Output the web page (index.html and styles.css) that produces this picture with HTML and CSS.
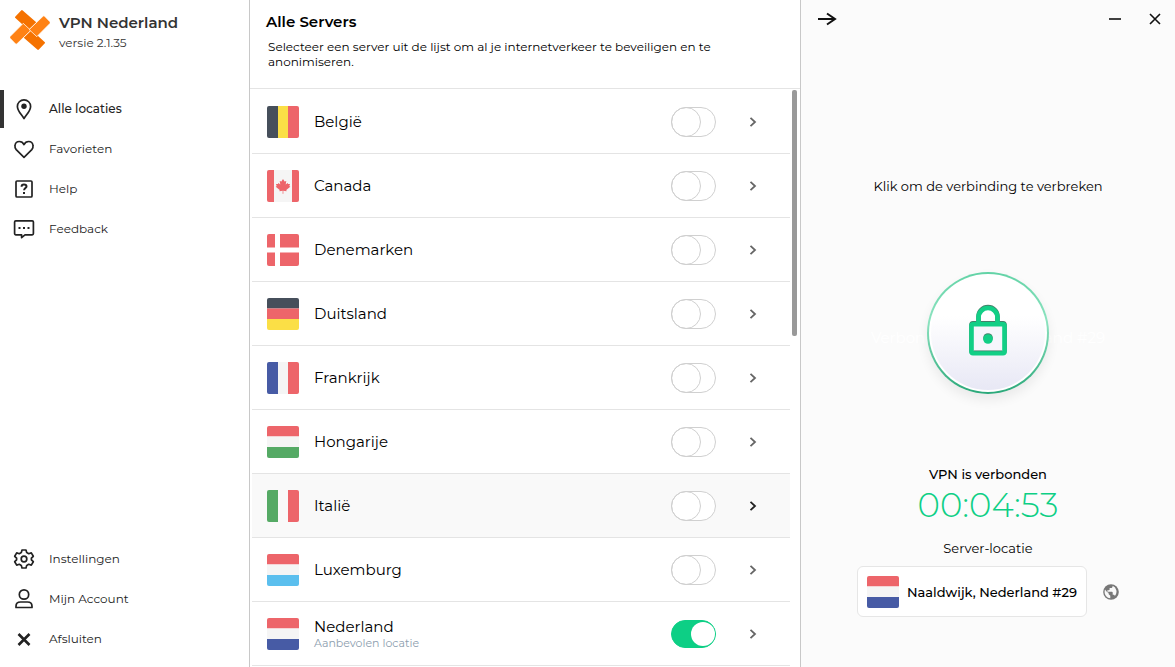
FILE: index.html
```html
<!DOCTYPE html>
<html lang="nl">
<head>
<meta charset="utf-8">
<meta name="viewport" content="width=device-width, initial-scale=1">
<title>VPN Nederland</title>
<link rel="stylesheet" href="styles.css">
</head>
<body>
<div class="app">
  <aside class="sidebar">
    <header class="brand">
      <svg class="brand-logo" viewBox="0.8 0.8 38.4 38.4" aria-hidden="true">
        <path d="M13 1.200 L26 12.500 L18.500 20 L6 8.500 Q5.200 7.800 6 7 L11.500 1.300 Q12.200 .5 13 1.200Z" fill="#f57200"/>
        <path d="M27 38.800 L14 27.500 L21.500 20 L34 31.500 Q34.800 32.200 34 33 L28.500 38.700 Q27.800 39.500 27 38.800Z" fill="#f57200"/>
        <path d="M.9 26.200 L13.500 13.600 L20.800 20.400 L7.500 33.200 Q6.700 34 6 33.300 L.9 28 Q.2 27 .9 26.200Z" fill="#ff8214" stroke="#fff" stroke-width=".7"/>
        <path d="M39.100 13.800 L26.500 26.400 L19.200 19.600 L32.500 6.800 Q33.300 6 34 6.700 L39.100 12 Q39.800 13 39.100 13.800Z" fill="#ff8214" stroke="#fff" stroke-width=".7"/>
      </svg>
      <div>
        <h1 class="brand-name">VPN Nederland</h1>
        <p class="brand-version">versie 2.1.35</p>
      </div>
    </header>

    <nav class="menu">
      <a class="menu-item is-active" href="#locaties">
        <svg class="icon" viewBox="0 0 24 24"><path d="M12 21.500C9.500 17.300 5.400 14 5.400 9.400a6.600 6.600 0 0 1 13.200 0C18.600 14 14.500 17.300 12 21.500Z"/><circle cx="12" cy="9.300" r="2.700" fill="currentColor" stroke="none"/></svg>
        Alle locaties</a>
      <a class="menu-item" href="#favorieten">
        <svg class="icon" viewBox="0 0 24 24"><path d="M12 20.300 4.200 12.600A5 5 0 0 1 3 8.500C3.300 6 5.100 4.500 7.300 4.500c2 0 3.800 1.200 4.700 3 .9-1.800 2.700-3 4.700-3 2.200 0 4 1.500 4.300 4a5 5 0 0 1-1.200 4.100Z"/></svg>
        Favorieten</a>
      <a class="menu-item" href="#help">
        <svg class="icon" viewBox="0 0 24 24"><rect x="4" y="4" width="16" height="16" rx="1"/><path d="M9.600 9.800V9.400c0-1.300 1-2 2.400-2s2.500.8 2.500 2c0 1.600-2.400 1.800-2.400 3.800" stroke-width="2"/><path d="M11 15h2v2h-2z" fill="currentColor" stroke="none"/></svg>
        Help</a>
      <a class="menu-item" href="#feedback">
        <svg class="icon" viewBox="0 0 24 24"><path d="M3.800 3.800h16.400a1.200 1.200 0 0 1 1.200 1.200v11.600a1.200 1.200 0 0 1-1.200 1.200H13l-3.400 2.800v-2.800H3.800a1.200 1.200 0 0 1-1.200-1.200V5a1.200 1.200 0 0 1 1.200-1.200Z"/><path d="M6.500 10h2v2h-2zM11 10h2v2h-2zM15.500 10h2v2h-2z" fill="currentColor" stroke="none"/></svg>
        Feedback</a>
    </nav>

    <nav class="menu menu-bottom">
      <a class="menu-item" href="#instellingen">
        <svg class="icon" viewBox="0 0 24 24"><circle cx="12" cy="12" r="2.800"/><path d="M10 3h4l.7 2.600 2 1.100 2.600-.8 2 3.400-1.900 1.900v1.600l1.900 1.900-2 3.400-2.600-.8-2 1.100L14 21h-4l-.7-2.600-2-1.100-2.600.8-2-3.400 1.900-1.900v-1.600L2.700 9.300l2-3.400 2.600.8 2-1.100Z"/></svg>
        Instellingen</a>
      <a class="menu-item" href="#account">
        <svg class="icon" viewBox="0 0 24 24"><circle cx="12" cy="7.500" r="4.700"/><path d="M4 20.500v-1.300c0-2.600 2-4.200 4.500-4.200h7c2.500 0 4.500 1.600 4.500 4.200v1.300Z"/></svg>
        Mijn Account</a>
      <a class="menu-item" href="#afsluiten">
        <svg class="icon" viewBox="0 0 24 24"><path d="m6.500 7 11 11M17.500 7l-11 11" stroke-width="2.600"/></svg>
        Afsluiten</a>
    </nav>
  </aside>

  <main class="servers">
    <header class="servers-head">
      <h2 class="servers-title">Alle Servers</h2>
      <p class="servers-text">Selecteer een server uit de lijst om al je internetverkeer te beveiligen en te anonimiseren.</p>
    </header>
    <div class="servers-body">
      <ul class="server-list">
        <li class="server">
          <svg class="flag" viewBox="0 0 32 32"><path fill="#464f5b" d="M0 0h11v32H0z"/><path fill="#fbdf46" d="M11 0h10v32H11z"/><path fill="#ed656a" d="M21 0h11v32H21z"/></svg>
          <label class="server-label" for="s1">België</label>
          <input class="toggle" type="checkbox" id="s1">
          <button class="more" aria-label="Meer over België"><svg viewBox="0 0 8 12"><path d="m1.500 1.800 4.500 4.200-4.500 4.200"/></svg></button>
        </li>
        <li class="server">
          <svg class="flag" viewBox="0 0 32 32"><path fill="#f5f5f5" d="M0 0h32v32H0z"/><path fill="#ed656a" d="M0 0h7v32H0zM25 0h7v32h-7zM16 9l1.600 2.600 1.700-.7-.6 3.600 1.900-1.400.5 1 2-.2-.8 2 1 .8-4 3.200.3 1.300-3.300-.4.100 3h-.8l.100-3-3.300.4.3-1.300-4-3.200 1-.8-.8-2 2 .2.5-1 1.900 1.400-.6-3.600 1.700.7Z"/></svg>
          <label class="server-label" for="s2">Canada</label>
          <input class="toggle" type="checkbox" id="s2">
          <button class="more" aria-label="Meer over Canada"><svg viewBox="0 0 8 12"><path d="m1.500 1.800 4.500 4.200-4.500 4.200"/></svg></button>
        </li>
        <li class="server">
          <svg class="flag" viewBox="0 0 32 32"><path fill="#fff" d="M0 0h32v32H0z"/><path fill="#ed656a" d="M0 0h8v13.500H0zM13 0h19v13.500H13zM0 18.500h8V32H0zM13 18.500h19V32H13z"/></svg>
          <label class="server-label" for="s3">Denemarken</label>
          <input class="toggle" type="checkbox" id="s3">
          <button class="more" aria-label="Meer over Denemarken"><svg viewBox="0 0 8 12"><path d="m1.500 1.800 4.500 4.200-4.500 4.200"/></svg></button>
        </li>
        <li class="server">
          <svg class="flag" viewBox="0 0 32 32"><path fill="#464f5b" d="M0 0h32v10.500H0z"/><path fill="#ed656a" d="M0 10.500h32V21H0z"/><path fill="#fbdf46" d="M0 21h32v11H0z"/></svg>
          <label class="server-label" for="s4">Duitsland</label>
          <input class="toggle" type="checkbox" id="s4">
          <button class="more" aria-label="Meer over Duitsland"><svg viewBox="0 0 8 12"><path d="m1.500 1.800 4.500 4.200-4.500 4.200"/></svg></button>
        </li>
        <li class="server">
          <svg class="flag" viewBox="0 0 32 32"><path fill="#475ba5" d="M0 0h11v32H0z"/><path fill="#f5f5f5" d="M11 0h10v32H11z"/><path fill="#ed656a" d="M21 0h11v32H21z"/></svg>
          <label class="server-label" for="s5">Frankrijk</label>
          <input class="toggle" type="checkbox" id="s5">
          <button class="more" aria-label="Meer over Frankrijk"><svg viewBox="0 0 8 12"><path d="m1.500 1.800 4.500 4.200-4.500 4.200"/></svg></button>
        </li>
        <li class="server">
          <svg class="flag" viewBox="0 0 32 32"><path fill="#ed656a" d="M0 0h32v10.500H0z"/><path fill="#f5f5f5" d="M0 10.500h32V21H0z"/><path fill="#55aa65" d="M0 21h32v11H0z"/></svg>
          <label class="server-label" for="s6">Hongarije</label>
          <input class="toggle" type="checkbox" id="s6">
          <button class="more" aria-label="Meer over Hongarije"><svg viewBox="0 0 8 12"><path d="m1.500 1.800 4.500 4.200-4.500 4.200"/></svg></button>
        </li>
        <li class="server is-hovered">
          <svg class="flag" viewBox="0 0 32 32"><path fill="#55aa65" d="M0 0h11v32H0z"/><path fill="#f9f9f9" d="M11 0h10v32H11z"/><path fill="#ed656a" d="M21 0h11v32H21z"/></svg>
          <label class="server-label" for="s7">Italië</label>
          <input class="toggle" type="checkbox" id="s7">
          <button class="more" aria-label="Meer over Italië"><svg viewBox="0 0 8 12"><path d="m1.500 1.800 4.500 4.200-4.500 4.200"/></svg></button>
        </li>
        <li class="server">
          <svg class="flag" viewBox="0 0 32 32"><path fill="#ed656a" d="M0 0h32v10.500H0z"/><path fill="#f5f5f5" d="M0 10.500h32V21H0z"/><path fill="#5bbfee" d="M0 21h32v11H0z"/></svg>
          <label class="server-label" for="s8">Luxemburg</label>
          <input class="toggle" type="checkbox" id="s8">
          <button class="more" aria-label="Meer over Luxemburg"><svg viewBox="0 0 8 12"><path d="m1.500 1.800 4.500 4.200-4.500 4.200"/></svg></button>
        </li>
        <li class="server">
          <svg class="flag" viewBox="0 0 32 32"><path fill="#ed656a" d="M0 0h32v10.500H0z"/><path fill="#f5f5f5" d="M0 10.500h32V21H0z"/><path fill="#475ba5" d="M0 21h32v11H0z"/></svg>
          <label class="server-label" for="s9">Nederland<small class="server-note">Aanbevolen locatie</small></label>
          <input class="toggle" type="checkbox" id="s9" checked>
          <button class="more" aria-label="Meer over Nederland"><svg viewBox="0 0 8 12"><path d="m1.500 1.800 4.500 4.200-4.500 4.200"/></svg></button>
        </li>
      </ul>
      <div class="scroll-track"><div class="scroll-thumb"></div></div>
    </div>
  </main>

  <section class="panel">
    <header class="panel-bar">
      <button class="bar-button" aria-label="Paneel inklappen"><svg viewBox="0 0 20 14"><path d="M1 7h17M10 1.500 18 7l-8 5.500" stroke-width="2"/></svg></button>
      <div class="window-controls">
        <button class="bar-button" aria-label="Minimaliseren"><svg viewBox="0 0 20 14"><path d="M4 7h12" stroke-width="1.600"/></svg></button>
        <button class="bar-button" aria-label="Sluiten"><svg viewBox="0 0 20 14"><path d="m5 2 10 10M15 2 5 12" stroke-width="1.600"/></svg></button>
      </div>
    </header>
    <div class="connection">
      <p class="hint">Klik om de verbinding te verbreken</p>
      <div class="lock-area">
        <p class="lock-ghost">Verbonden met Nederland #29</p>
        <button class="lock-button" aria-label="Verbinding verbreken">
          <svg class="lock-icon" viewBox="0 0 38 52"><path d="M9.500 18V11.500a9.500 9.500 0 0 1 19 0v7" stroke="#44806a"/><rect x="2.500" y="18.300" width="33" height="29" rx="1.500" stroke="#44806a"/><path d="M9.500 19V12.500a9.500 9.500 0 0 1 19 0v6.500"/><rect x="2.500" y="19.300" width="33" height="29" rx="1.500" fill="#f6f6fc"/><path d="M4.800 45.800h28.400" stroke="#44806a" stroke-width=".8"/><circle cx="19" cy="33" r="4.800" fill="#44806a" stroke="none"/><circle cx="19" cy="34" r="4.800" fill="#12cf86" stroke="none"/></svg>
        </button>
      </div>
      <p class="status">VPN is verbonden</p>
      <p class="timer">00:04:53</p>
      <p class="location-label">Server-locatie</p>
      <div class="location-row">
        <button class="location">
          <svg class="flag" viewBox="0 0 32 32"><path fill="#ed656a" d="M0 0h32v10.500H0z"/><path fill="#f5f5f5" d="M0 10.500h32V21H0z"/><path fill="#475ba5" d="M0 21h32v11H0z"/></svg>
          Naaldwijk, Nederland #29
        </button>
        <button class="globe" aria-label="Wereldkaart"><svg viewBox="0 0 16 16"><circle cx="8" cy="8" r="7.800" fill="#777"/><path fill="#f8f8f8" d="M2 5.500 4 8l1.500.8.2 1.500 1.600 1.400v2.600C4 14 1.600 11.300 1.600 8c0-.9.1-1.700.4-2.500ZM9.600 1.800v.6c0 .8-.7 1.500-1.500 1.500H6.600v1.500c0 .5-.3.8-.8.8H4.400v1.500h4.500c.5 0 .8.400.8.800v2.300h.7c.7 0 1.300.5 1.500 1.100A6.400 6.400 0 0 0 9.600 1.800Z"/></svg></button>
      </div>
    </div>
  </section>
</div>
</body>
</html>
```
FILE: styles.css
```css
*,
*::before {
  box-sizing: border-box;
}

body,
h1,
h2,
p,
ul {
  margin: 0;
  padding: 0;
}

body {
  background: #fff;
  color: #000;
  font-family: Montserrat, Inter, "Open Sans", sans-serif;
  font-size: 13px;
  line-height: 16px;
}

button {
  margin: 0;
  padding: 0;
  border: 0;
  background: none;
  color: inherit;
  font: inherit;
  cursor: pointer;
}

svg {
  display: block;
}

.app {
  display: grid;
  grid-template-columns: 250px minmax(0, 1fr) 375px;
  height: 100vh;
  overflow: hidden;
}

/* Sidebar */
.sidebar {
  display: flex;
  flex-direction: column;
  padding-bottom: 8px;
  border-right: 1px solid #c8c8c8;
  color: #333;
}

.brand {
  display: flex;
  gap: 9px;
  height: 89px;
  padding: 10px;
}

.brand-logo {
  width: 40px;
  height: 40px;
}

.brand-name {
  padding-top: 3px;
  font-size: 15px;
  font-weight: 600;
  line-height: 20px;
}

.brand-version {
  font-size: 12px;
  line-height: 20px;
}

.menu-bottom {
  margin-top: auto;
}

.menu-item {
  display: flex;
  align-items: center;
  gap: 13px;
  height: 40px;
  padding-left: 12px;
  color: #222;
  font-size: 12px;
  text-decoration: none;
}

.menu-item.is-active {
  padding-left: 8px;
  border-left: 4px solid #333;
  height: 38px;
  margin: 1px 0;
  font-weight: 500;
}

.icon {
  width: 24px;
  height: 24px;
  fill: none;
  stroke: currentColor;
  stroke-width: 1.7;
  stroke-linejoin: round;
}

/* Server list */
.servers {
  display: flex;
  flex-direction: column;
  min-height: 0;
}

.servers-head {
  height: 89px;
  padding: 12px 16px;
  border-bottom: 1px solid #e4e4e4;
}

.servers-title {
  font-size: 15px;
  font-weight: 600;
  line-height: 20px;
}

.servers-text {
  max-width: 480px;
  padding: 7px 2px;
  font-size: 12px;
  line-height: 15px;
}

.servers-body {
  display: flex;
  flex: 1;
  gap: 2px;
  min-height: 0;
  padding: 1px 3px 0 2px;
}

.server-list {
  flex: 1;
  list-style: none;
}

.server {
  display: flex;
  align-items: center;
  gap: 15px;
  height: 64px;
  padding: 0 27px 0 15px;
  border-bottom: 1px solid #e4e4e4;
}

.server.is-hovered {
  background: #f9f9f9;
}

.flag {
  flex: none;
  width: 32px;
  height: 32px;
  border-radius: 2px;
}

.server-label {
  flex: 1;
  font-size: 15px;
  line-height: 18px;
}

.server-note {
  display: block;
  color: #8c9dae;
  font-size: 11px;
  line-height: 14px;
}

.toggle {
  appearance: none;
  width: 45px;
  height: 30px;
  margin: 0 12px 0 0;
  border: 1px solid #d0d0d0;
  border-radius: 15px;
  background: #fff;
  cursor: pointer;
}

.toggle::before {
  content: "";
  display: block;
  width: 30px;
  height: 30px;
  margin: -1px;
  border: 1px solid #d0d0d0;
  border-radius: 50%;
}

.toggle:checked {
  height: 28px;
  border-color: #0dcf85;
  background: #0dcf85;
}

.toggle:checked::before {
  width: 24px;
  height: 24px;
  margin: 1px 0 0 auto;
  border: 0;
  background: #fff;
}

.more {
  display: grid;
  place-items: center;
  width: 20px;
  height: 24px;
}

.more svg {
  width: 8px;
  height: 12px;
  fill: none;
  stroke: #666;
  stroke-width: 1.8;
}

.is-hovered .more svg {
  stroke: #222;
}

.scroll-track {
  width: 5px;
}

.scroll-thumb {
  height: 42.6%;
  border-radius: 2px;
  background: #999;
}

/* Connection panel */
.panel {
  border-left: 1px solid #c8c8c8;
  background: #fbfbfb;
}

.panel-bar,
.window-controls {
  display: flex;
  justify-content: space-between;
}

.panel-bar {
  padding: 9px 10px 9px 16px;
}

.window-controls {
  gap: 20px;
}

.bar-button {
  display: grid;
  place-items: center;
  width: 20px;
  height: 20px;
}

.bar-button svg {
  width: 20px;
  height: 14px;
  fill: none;
  stroke: #111;
}

.connection {
  display: flex;
  flex-direction: column;
  align-items: center;
  padding-top: 139px;
}

.hint,
.status,
.location-label {
  line-height: 18px;
}

.lock-area {
  display: grid;
  place-items: center;
  padding: 77px 0 71px;
}

.lock-ghost,
.lock-button {
  grid-area: 1 / 1;
}

.lock-ghost {
  padding-top: 10px;
  color: #fff;
  font-size: 15px;
}

.lock-button {
  z-index: 1;
  display: grid;
  place-items: center;
  width: 122px;
  height: 122px;
  padding: 2px;
  border: 2px solid transparent;
  border-radius: 50%;
  background:
    linear-gradient(#fff 35%, #e8e8f5) content-box,
    linear-gradient(#fff, #fff) padding-box,
    linear-gradient(#62d3a6, #8de3c0 40%, #2aa879) border-box;
  box-shadow: 0 6px 12px rgba(0, 0, 0, 0.07);
}

.lock-icon {
  width: 38px;
  height: 52px;
  margin-bottom: 4px;
  overflow: visible;
  fill: none;
  stroke: #12cf86;
  stroke-width: 4.6;
}

.status {
  font-weight: 500;
}

.timer {
  padding: 2px 0;
  color: #0dcf85;
  font-size: 34px;
  font-weight: 300;
  line-height: 40px;
}

.location-label {
  padding-top: 12px;
}

.location-row {
  display: flex;
  align-items: center;
  gap: 16px;
  padding: 9px 0;
}

.location {
  display: flex;
  align-items: center;
  gap: 8px;
  height: 51px;
  padding: 0 9px;
  border: 1px solid #e6e6e6;
  border-radius: 6px;
  background: #fff;
  font-size: 13px;
  font-weight: 500;
}

.globe svg {
  width: 16px;
  height: 16px;
}
```
